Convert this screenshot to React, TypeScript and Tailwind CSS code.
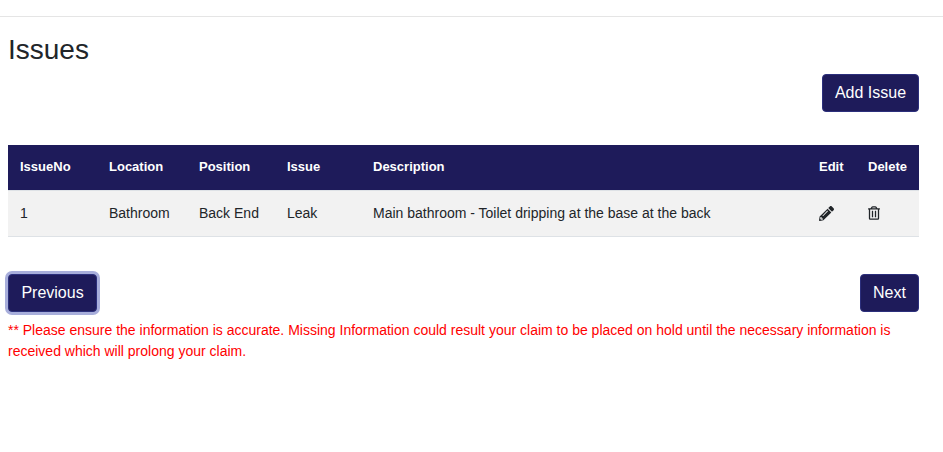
import { FaPencilAlt, FaRegTrashAlt } from "react-icons/fa";

const columns = [
  { label: "IssueNo", width: "w-[89px]" },
  { label: "Location", width: "w-[90px]" },
  { label: "Position", width: "w-[88px]" },
  { label: "Issue", width: "w-[86px]" },
  { label: "Description", width: "w-[446px]" },
  { label: "Edit", width: "w-[49px]" },
  { label: "Delete", width: "" },
];

const buttonClass =
  "rounded-[4px] border border-[#2c2f7c] bg-[#1e1b5a] text-base leading-6 text-white";

export default function App() {
  return (
    <div className="min-h-[452px] bg-white font-['Liberation_Sans',Arial,sans-serif] text-[#212529]">
      <div className="h-[17px] border-b border-[#e5e5e5]" />
      <div className="pl-2 pr-6">
        <h1 className="mt-4 text-[28px] leading-[34px] font-normal">Issues</h1>
        <div className="mt-[7px] flex justify-end">
          <button className={`${buttonClass} h-[38px] w-[97px]`}>Add Issue</button>
        </div>

        <table className="mt-[33px] w-full border-collapse text-[13px]">
          <thead>
            <tr className="h-[45px] border-b border-[#dee2e6] bg-[#1e1b5a] text-left font-bold text-white">
              {columns.map((col) => (
                <th key={col.label} className={`${col.width} pb-px pl-3 font-bold`}>
                  {col.label}
                </th>
              ))}
            </tr>
          </thead>
          <tbody>
            <tr className="h-[46px] border-b border-[#dee2e6] bg-[#f2f2f2] text-[14px]">
              <td className="pl-3">1</td>
              <td className="pl-3">Bathroom</td>
              <td className="pl-3">Back End</td>
              <td className="pl-3">Leak</td>
              <td className="pl-3">Main bathroom - Toilet dripping at the base at the back</td>
              <td className="pl-3">
                <FaPencilAlt className="h-[15px] w-[15px] text-[#212529]" />
              </td>
              <td className="pl-3">
                <FaRegTrashAlt className="h-[14px] w-[12px] text-[#212529]" />
              </td>
            </tr>
          </tbody>
        </table>

        <div className="mt-[37px] flex items-center justify-between">
          <button className={`${buttonClass} h-[38px] w-[89px] shadow-[0_0_0_3px_#a8aedb]`}>
            Previous
          </button>
          <button className={`${buttonClass} h-[38px] w-[59px]`}>Next</button>
        </div>
        <p className="mt-2 pr-[2px] text-[14px] leading-[21px] text-[#ff0000]">
          ** Please ensure the information is accurate. Missing Information could result your claim to be placed on hold until the necessary information is received which will prolong your claim.
        </p>
      </div>
    </div>
  );
}
